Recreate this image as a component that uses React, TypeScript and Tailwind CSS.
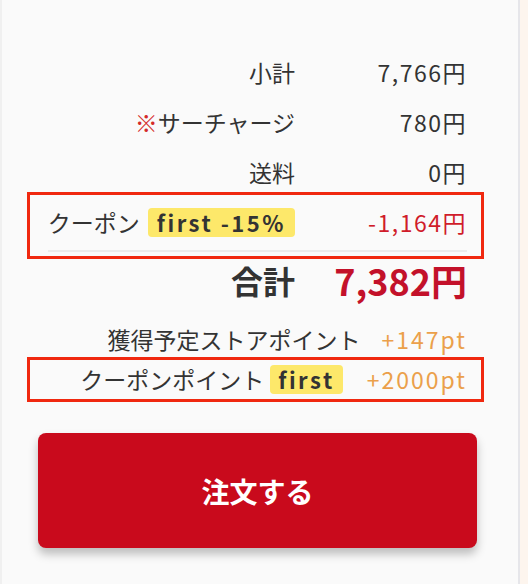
import React from "react";

const font = { fontFamily: '"Noto Sans CJK JP", "Noto Sans", sans-serif' };

function Row({ label, value, valueClass = "text-[#333]" }: { label: React.ReactNode; value: string; valueClass?: string }) {
  return (
    <div className="flex h-[40px] items-center pr-[14px]">
      <div className="flex-1 text-right text-[23px] text-[#333]">{label}</div>
      <div className={`w-[172px] text-right text-[23px] tracking-[1.5px] ${valueClass}`}>{value}</div>
    </div>
  );
}

export default function App() {
  return (
    <div className="flex h-[584px] w-[528px] bg-[#fdf5ee]" style={font}>
      <div className="flex h-full w-[520px] flex-col border-l-2 border-r-2 border-l-[#f0f0f0] border-r-[#e6e6ea] bg-[#fafafa]">
        <div className="ml-[25px] mr-[34px] flex flex-col gap-[10px] border-x-[3px] border-transparent pt-[52px]">
          <Row label="小計" value="7,766円" />
          <Row
            label={
              <span>
                <span className="text-[#d42a2a]">※</span>サーチャージ
              </span>
            }
            value="780円"
          />
          <Row label="送料" value="0円" />
        </div>
        <div className="ml-[25px] mr-[34px] border-[3px] border-[#f0280f] pt-[7px] pb-[4px]">
          <div className="flex h-[40px] items-center pr-[14px]">
            <div className="flex flex-1 items-center justify-end gap-[8px] text-[23px] text-[#333]">
              <span>クーポン</span>
              <span className="flex h-[29px] items-center rounded-[4px] bg-[#fde86a] px-[9px] text-[22px] font-bold tracking-[2.5px] text-[#333]">
                first -15%
              </span>
            </div>
            <div className="w-[172px] text-right text-[23px] tracking-[1.5px] text-[#d01c2a]">-1,164円</div>
          </div>
          <div className="mt-[8px] ml-[18px] mr-[14px] h-[2px] bg-[#ebebeb]" />
        </div>
        <div className="ml-[25px] mr-[34px] mt-[1px] flex h-[40px] items-center border-x-[3px] border-transparent pr-[14px]">
          <div className="flex-1 text-right text-[32px] font-bold text-[#333]">合計</div>
          <div className="w-[172px] text-right text-[36px] font-bold text-[#c3112a]">7,382円</div>
        </div>
        <div className="ml-[25px] mr-[34px] mt-[21px] flex h-[36px] items-center justify-end gap-[21px] border-x-[3px] border-transparent pr-[14px] text-[23px]">
          <span className="text-[#333]">獲得予定ストアポイント</span>
          <span className="tracking-[2px] text-[#eba04a]">+147pt</span>
        </div>
        <div className="ml-[25px] mr-[34px] flex h-[45px] items-center justify-end gap-[24px] border-[3px] border-[#f0280f] pr-[14px] text-[23px]">
          <span className="flex items-center gap-[6px] text-[#333]">
            クーポンポイント
            <span className="flex h-[29px] items-center rounded-[4px] bg-[#fde86a] px-[8px] text-[22px] font-bold tracking-[2.5px] text-[#333]">
              first
            </span>
          </span>
          <span className="tracking-[2px] text-[#eba04a]">+2000pt</span>
        </div>
        <div className="ml-[36px] mr-[41px] mt-[31px] flex h-[115px] items-center justify-center rounded-[8px] bg-[#c90a1c] shadow-[0_6px_10px_rgba(0,0,0,0.25)]">
          <span className="text-[28px] font-bold text-white">注文する</span>
        </div>
      </div>
    </div>
  );
}
